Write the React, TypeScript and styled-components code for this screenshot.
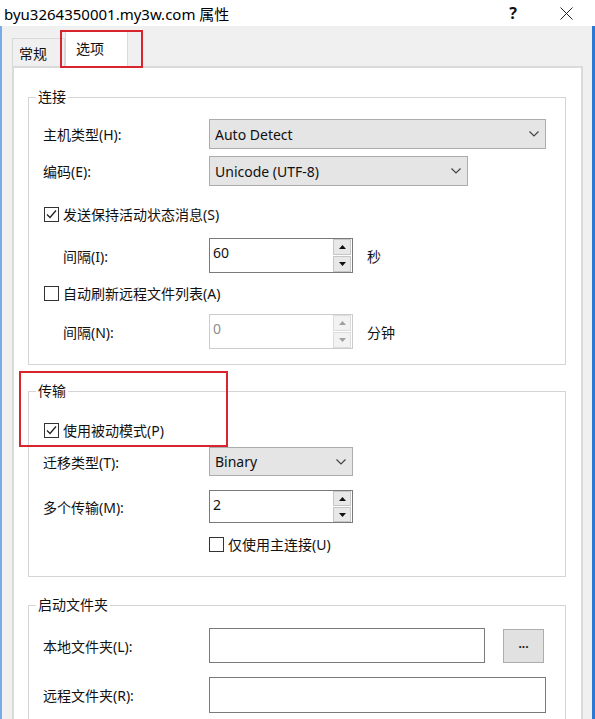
import React from "react";
import styled, { createGlobalStyle } from "styled-components";

const Global = createGlobalStyle`
  html, body { margin: 0; padding: 0; background: #ffffff; }
  body { font-family: "Noto Sans", "Noto Sans CJK SC", sans-serif; color: #111; }
  * { box-sizing: border-box; }
`;

const Window = styled.div`
  width: 595px;
  height: 719px;
  overflow: hidden;
  display: flex;
  flex-direction: column;
  background: #fff;
`;

const TitleBar = styled.div`
  height: 26px;
  flex: none;
  display: flex;
  align-items: center;
  padding-left: 4px;
  background: #fff;
`;

const Title = styled.div`
  flex: 1;
  font-size: 15px;
  white-space: nowrap;
  color: #000;
`;

const TitleButton = styled.div<{ $w: number }>`
  width: ${(p) => p.$w}px;
  height: 26px;
  display: flex;
  align-items: center;
  justify-content: center;
  font-size: 16px;
  font-weight: 700;
  color: #111;
`;

const Body = styled.div`
  flex: 1;
  min-height: 0;
  display: flex;
  flex-direction: column;
  background: #f0f0f0;
  border-left: 2px solid #78ace6;
  border-right: 3px solid #2a79d7;
`;

const TabStrip = styled.div`
  height: 40px;
  flex: none;
  display: flex;
  align-items: flex-end;
  padding-left: 10px;
  position: relative;
  z-index: 1;
`;

const Tab = styled.div<{ $active?: boolean; $w: number }>`
  position: relative;
  width: ${(p) => p.$w}px;
  height: ${(p) => (p.$active ? 37 : 28)}px;
  margin-bottom: ${(p) => (p.$active ? -2 : 0)}px;
  padding-left: ${(p) => (p.$active ? 10 : 6)}px;
  padding-bottom: ${(p) => (p.$active ? 4 : 0)}px;
  display: flex;
  align-items: center;
  background: ${(p) => (p.$active ? "#ffffff" : "#f0f0f0")};
  border: 1px solid #d9d9d9;
  border-bottom: none;
  font-size: 14px;
  color: #111;
`;

const Highlight = styled.div<{ $l: number; $t: number; $w: number; $h: number }>`
  position: absolute;
  left: ${(p) => p.$l}px;
  top: ${(p) => p.$t}px;
  width: ${(p) => p.$w}px;
  height: ${(p) => p.$h}px;
  border: 2px solid #d7242d;
  pointer-events: none;
  z-index: 2;
`;

const Page = styled.div`
  flex: 1;
  margin: 0 9px 0 10px;
  background: #fff;
  border: 2px solid #dadada;
  border-bottom: none;
  padding: 0 15px 0 14px;
  display: flex;
  flex-direction: column;
`;

const GroupWrap = styled.div<{ $mt: number }>`
  position: relative;
  margin-top: ${(p) => p.$mt}px;
`;

const Fieldset = styled.fieldset<{ $pb: number }>`
  margin: 0;
  min-width: 0;
  border: 1px solid #d5d5d5;
  padding: 0 14px ${(p) => p.$pb}px 14px;
`;

const Legend = styled.legend`
  padding: 0 2px;
  margin-left: -7px;
  height: 20px;
  line-height: 20px;
  font-size: 14px;
  color: #111;
`;

const Row = styled.div<{ $mt: number; $h: number }>`
  display: flex;
  align-items: center;
  height: ${(p) => p.$h}px;
  margin-top: ${(p) => p.$mt}px;
`;

const Label = styled.label<{ $indent?: number }>`
  width: 166px;
  flex: none;
  padding-left: ${(p) => p.$indent ?? 0}px;
  font-size: 14px;
  white-space: nowrap;
  color: #111;
`;

const CheckLine = styled.label<{ $ml?: number }>`
  display: flex;
  align-items: center;
  gap: 4px;
  margin-left: ${(p) => p.$ml ?? 1}px;
  font-size: 14px;
  white-space: nowrap;
  color: #111;
`;

const Box = styled.span`
  width: 15px;
  height: 15px;
  flex: none;
  border: 1px solid #333;
  background: #fff;
  display: inline-flex;
  align-items: center;
  justify-content: center;
`;

const Combo = styled.div<{ $w: number }>`
  width: ${(p) => p.$w}px;
  height: 100%;
  background: #e5e5e5;
  border: 1px solid #acacac;
  display: flex;
  align-items: center;
  justify-content: space-between;
  padding: 0 6px 0 5px;
  font-size: 14px;
  color: #111;
`;

const Spin = styled.div<{ $disabled?: boolean }>`
  width: 144px;
  height: 100%;
  flex: none;
  display: flex;
  background: #fff;
  border: 1px solid ${(p) => (p.$disabled ? "#cccccc" : "#7a7a7a")};
`;

const SpinText = styled.div<{ $disabled?: boolean }>`
  flex: 1;
  padding: 4px 0 0 3px;
  line-height: 20px;
  font-size: 14px;
  color: ${(p) => (p.$disabled ? "#8d8d8d" : "#111")};
`;

const SpinButtons = styled.div`
  width: 19px;
  display: flex;
  flex-direction: column;
  gap: 1px;
  padding: 0 1px 0 0;
`;

const SpinButton = styled.div<{ $disabled?: boolean }>`
  flex: 1;
  display: flex;
  align-items: center;
  justify-content: center;
  background: ${(p) => (p.$disabled ? "#f2f2f2" : "#e8e8e8")};
  border: 1px solid ${(p) => (p.$disabled ? "#dcdcdc" : "#c6c6c6")};
`;

const Unit = styled.span`
  margin-left: 14px;
  font-size: 14px;
  color: #111;
`;

const Field = styled.div<{ $w: number }>`
  width: ${(p) => p.$w}px;
  height: 100%;
  flex: none;
  background: #fff;
  border: 1px solid #7a7a7a;
`;

const DotsButton = styled.div`
  width: 41px;
  height: 34px;
  margin-left: 18px;
  display: flex;
  align-items: center;
  justify-content: center;
  background: #e1e1e1;
  border: 1px solid #adadad;
  font-size: 12px;
  font-weight: 700;
  letter-spacing: 0;
  color: #222;
  padding-bottom: 4px;
`;

const Check = ({ checked }: { checked?: boolean }) => (
  <Box>
    {checked && (
      <svg width="11" height="11" viewBox="0 0 11 11">
        <polyline points="1,5.5 4,8.5 10,1.5" fill="none" stroke="#222" strokeWidth="1.3" />
      </svg>
    )}
  </Box>
);

const Chevron = () => (
  <svg width="10" height="6" viewBox="0 0 10 6">
    <polyline points="0.5,0.5 5,5 9.5,0.5" fill="none" stroke="#444" strokeWidth="1.2" />
  </svg>
);

const Tri = ({ up, color }: { up?: boolean; color: string }) => (
  <svg width="7" height="4" viewBox="0 0 7 4">
    <polygon points={up ? "0,4 7,4 3.5,0" : "0,0 7,0 3.5,4"} fill={color} />
  </svg>
);

const SpinBox = ({ value, disabled }: { value: string; disabled?: boolean }) => (
  <Spin $disabled={disabled}>
    <SpinText $disabled={disabled}>{value}</SpinText>
    <SpinButtons>
      <SpinButton $disabled={disabled}>
        <Tri up color={disabled ? "#a0a0a0" : "#111"} />
      </SpinButton>
      <SpinButton $disabled={disabled}>
        <Tri color={disabled ? "#a0a0a0" : "#111"} />
      </SpinButton>
    </SpinButtons>
  </Spin>
);

export default function App() {
  return (
    <Window>
      <Global />
      <TitleBar>
        <Title>byu3264350001.my3w.com 属性</Title>
        <TitleButton $w={50}>?</TitleButton>
        <TitleButton $w={57}>
          <svg width="13" height="13" viewBox="0 0 13 13">
            <path d="M0.5 0.5 L12.5 12.5 M12.5 0.5 L0.5 12.5" stroke="#222" strokeWidth="1" />
          </svg>
        </TitleButton>
      </TitleBar>
      <Body>
        <TabStrip>
          <Tab $w={53}>常规</Tab>
          <Tab $w={63} $active>
            选项
            <Highlight $l={-6} $t={-2} $w={83} $h={38} />
          </Tab>
        </TabStrip>
        <Page>
          <GroupWrap $mt={19}>
            <Fieldset $pb={15}>
              <Legend>连接</Legend>
              <Row $mt={12} $h={30}>
                <Label>主机类型(H):</Label>
                <Combo $w={337}>
                  Auto Detect
                  <Chevron />
                </Combo>
              </Row>
              <Row $mt={7} $h={30}>
                <Label>编码(E):</Label>
                <Combo $w={259}>
                  Unicode (UTF-8)
                  <Chevron />
                </Combo>
              </Row>
              <Row $mt={18} $h={20}>
                <CheckLine>
                  <Check checked />
                  发送保持活动状态消息(S)
                </CheckLine>
              </Row>
              <Row $mt={14} $h={35}>
                <Label $indent={20}>间隔(I):</Label>
                <SpinBox value="60" />
                <Unit>秒</Unit>
              </Row>
              <Row $mt={10} $h={20}>
                <CheckLine>
                  <Check />
                  自动刷新远程文件列表(A)
                </CheckLine>
              </Row>
              <Row $mt={11} $h={35}>
                <Label $indent={20}>间隔(N):</Label>
                <SpinBox value="0" disabled />
                <Unit>分钟</Unit>
              </Row>
            </Fieldset>
          </GroupWrap>

          <GroupWrap $mt={16}>
            <Fieldset $pb={22}>
              <Legend>传输</Legend>
              <Row $mt={19} $h={20}>
                <CheckLine>
                  <Check checked />
                  使用被动模式(P)
                </CheckLine>
              </Row>
              <Row $mt={7} $h={29}>
                <Label>迁移类型(T):</Label>
                <Combo $w={144}>
                  Binary
                  <Chevron />
                </Combo>
              </Row>
              <Row $mt={14} $h={33}>
                <Label>多个传输(M):</Label>
                <SpinBox value="2" />
              </Row>
              <Row $mt={11} $h={20}>
                <CheckLine $ml={166}>
                  <Check />
                  仅使用主连接(U)
                </CheckLine>
              </Row>
            </Fieldset>
            <Highlight $l={-9} $t={-10} $w={209} $h={76} />
          </GroupWrap>

          <GroupWrap $mt={18}>
            <Fieldset $pb={20}>
              <Legend>启动文件夹</Legend>
              <Row $mt={13} $h={35}>
                <Label>本地文件夹(L):</Label>
                <Field $w={276} />
                <DotsButton>...</DotsButton>
              </Row>
              <Row $mt={14} $h={36}>
                <Label>远程文件夹(R):</Label>
                <Field $w={337} />
              </Row>
            </Fieldset>
          </GroupWrap>
        </Page>
      </Body>
    </Window>
  );
}
